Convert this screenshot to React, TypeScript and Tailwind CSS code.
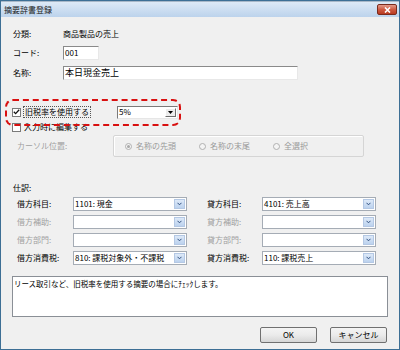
import React from 'react';

const font = "font-['Noto_Sans_CJK_JP','Noto_Sans',sans-serif]";

// Vista style combo box with small blue drop button
const Combo = ({ value, width = 'w-[114px]' }: { value: string; width?: string }) => (
  <div className={`${width} h-[14px] shrink-0 flex items-stretch bg-white border border-[#a5acb5]`}>
    <div className="flex-1 flex items-center pl-[1px] text-black leading-none whitespace-nowrap overflow-hidden">{value}</div>
    <div className="w-[11px] my-[1px] mr-[1px] flex items-center justify-center bg-gradient-to-b from-[#dde9f8] to-[#bcd2ee] border border-[#b4c8e4]">
      <svg width="5" height="4" viewBox="0 0 5 4">
        <path d="M0.5 0.8 L2.5 2.8 L4.5 0.8" fill="none" stroke="#2f4f7f" strokeWidth="1" />
      </svg>
    </div>
  </div>
);

const Radio = ({ label, checked }: { label: string; checked?: boolean }) => (
  <div className="flex items-center gap-[4px] text-[#9a9a9a]">
    <div className="w-[7px] h-[7px] rounded-full border border-[#b0b0b0] bg-[#f4f4f4] flex items-center justify-center">
      {checked && <div className="w-[3px] h-[3px] rounded-full bg-[#a8a8a8]" />}
    </div>
    <span>{label}</span>
  </div>
);

const Row = ({ left, leftVal, right, rightVal, disabled }: { left: string; leftVal: string; right: string; rightVal: string; disabled?: boolean }) => (
  <div className="flex items-center h-[14px]">
    <div className={`w-[61px] shrink-0 pl-[5px] ${disabled ? 'text-[#a0a0a0]' : 'text-black'} whitespace-nowrap`}>{left}</div>
    <Combo value={leftVal} />
    <div className={`w-[75px] shrink-0 pl-[20px] ${disabled ? 'text-[#a0a0a0]' : 'text-black'} whitespace-nowrap`}>{right}</div>
    <Combo value={rightVal} />
  </div>
);

export default function App() {
  return (
    <div className={`w-[400px] h-[350px] flex flex-col bg-[#f0f0f0] border border-[#3d6f95] ${font} text-[8px] text-black overflow-hidden`}>
      {/* title bar */}
      <div className="h-[16px] flex items-center justify-between bg-gradient-to-b from-[#dde9f6] to-[#bcd3ec] border-t border-[#a9b8c8]">
        <span className="pl-[3px] text-[8px] text-[#1a1a1a]">摘要辞書登録</span>
        <div className="mr-[2px] w-[20px] h-[11px] rounded-[2px] border border-[#7a2b1d] bg-gradient-to-b from-[#e29a8a] via-[#cf5a42] to-[#b8391f] flex items-center justify-center">
          <svg width="7" height="6" viewBox="0 0 7 6">
            <path d="M1 0.5 L6 5.5 M6 0.5 L1 5.5" stroke="#ffffff" strokeWidth="1.6" />
          </svg>
        </div>
      </div>

      <div className="relative flex-1 flex flex-col pl-[11px] pr-[11px]">
        {/* 分類 */}
        <div className="mt-[11px] h-[12px] flex items-center">
          <span className="w-[51px] pl-[1px]">分類:</span>
          <span>商品製品の売上</span>
        </div>
        {/* コード */}
        <div className="mt-[6px] h-[14px] flex items-center">
          <span className="w-[51px] pl-[1px]">コード:</span>
          <div className="w-[36px] h-[14px] bg-white border-t border-l border-[#8a8a8a] border-b border-r border-b-[#e8e8e8] border-r-[#e8e8e8] flex items-center pl-[1px]">001</div>
        </div>
        {/* 名称 */}
        <div className="mt-[6px] h-[14px] flex items-center">
          <span className="w-[51px] pl-[1px]">名称:</span>
          <div className="w-[235px] h-[14px] bg-white border-t border-l border-[#8a8a8a] border-b border-r border-b-[#e8e8e8] border-r-[#e8e8e8] flex items-center pl-[1px] text-[9px]">本日現金売上</div>
        </div>

        {/* 旧税率 */}
        <div className="mt-[25px] h-[14px] flex items-center">
          <div className="w-[9px] h-[9px] bg-white border border-[#7a7a7a] flex items-center justify-center">
            <svg width="7" height="6" viewBox="0 0 7 6">
              <path d="M0.8 2.8 L2.6 4.6 L6.2 0.8" fill="none" stroke="#111" strokeWidth="1.3" />
            </svg>
          </div>
          <span className="ml-[2px] px-[1px] border border-dotted border-[#555] leading-[10px]">旧税率を使用する</span>
          <div className="ml-[26px] w-[61px] h-[13px] flex items-stretch bg-white border-t border-l border-[#7a7a7a] border-b border-r border-b-[#e6e6e6] border-r-[#e6e6e6]">
            <div className="flex-1 flex items-center pl-[1px]">5%</div>
            <div className="w-[11px] m-[1px] bg-[#ececec] border border-t-white border-l-white border-b-[#6d6d6d] border-r-[#6d6d6d] flex items-center justify-center">
              <svg width="5" height="3" viewBox="0 0 5 3"><path d="M0 0 H5 L2.5 3 Z" fill="#000" /></svg>
            </div>
          </div>
        </div>
        {/* 入力時に編集する */}
        <div className="mt-[2px] h-[12px] flex items-center">
          <div className="w-[9px] h-[9px] bg-white border border-[#7a7a7a]" />
          <span className="ml-[3px]">入力時に編集する</span>
        </div>
        {/* カーソル位置 */}
        <div className="mt-[2px] h-[22px] flex items-center">
          <span className="w-[101px] pl-[5px] text-[#a0a0a0]">カーソル位置:</span>
          <div className="w-[251px] h-[22px] border border-[#d5d5d5] rounded-[2px] flex items-center pl-[11px] gap-[23px] bg-[#f0f0f0] shadow-[inset_1px_1px_0_#ffffff]">
            <Radio label="名称の先頭" checked />
            <Radio label="名称の末尾" />
            <Radio label="全選択" />
          </div>
        </div>

        {/* 仕訳 */}
        <div className="mt-[25px] h-[12px] flex items-center pl-[1px]">仕訳:</div>
        <div className="mt-[3px] flex flex-col gap-[4px]">
          <Row left="借方科目:" leftVal="1101: 現金" right="貸方科目:" rightVal="4101: 売上高" />
          <Row left="借方補助:" leftVal="" right="貸方補助:" rightVal="" disabled />
          <Row left="借方部門:" leftVal="" right="貸方部門:" rightVal="" disabled />
          <Row left="借方消費税:" leftVal="810: 課税対象外・不課税" right="貸方消費税:" rightVal="110: 課税売上" />
        </div>

        {/* memo */}
        <div className="mt-[11px] w-[376px] h-[41px] bg-white border border-[#8a8f96] pl-[1px] pt-[2px] text-[7.5px] leading-[10px] whitespace-nowrap">
          リース取引など、旧税率を使用する摘要の場合にﾁｪｯｸします。
        </div>

        {/* buttons */}
        <div className="mt-[10px] flex justify-end gap-[13px] pr-[1px]">
          <button className="w-[57px] h-[16px] rounded-[2px] border border-[#707070] bg-gradient-to-b from-[#f4f4f4] via-[#ebebeb] to-[#d6d6d6] text-[8px]">OK</button>
          <button className="w-[57px] h-[16px] rounded-[2px] border border-[#707070] bg-gradient-to-b from-[#f4f4f4] via-[#ebebeb] to-[#d6d6d6] text-[8px]">キャンセル</button>
        </div>

        {/* red dashed annotation */}
        <div className="absolute left-[4px] top-[82px] w-[176px] h-[27px] border-2 border-dashed border-[#d81010] rounded-[8px] pointer-events-none" />
      </div>
    </div>
  );
}
